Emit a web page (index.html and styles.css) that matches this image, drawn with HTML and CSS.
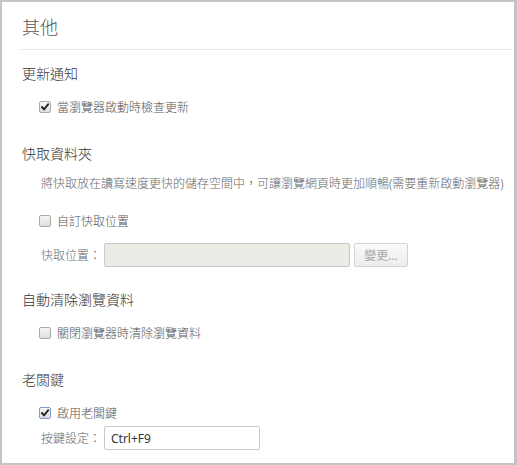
FILE: index.html
```html
<!DOCTYPE html>
<html lang="zh-TW">

<head>
    <meta charset="UTF-8">
    <meta name="viewport" content="width=device-width, initial-scale=1.0">
    <title>其他 - 設定</title>
    <link rel="stylesheet" href="styles.css">
</head>

<body>
    <div class="settings-frame">
        <div class="page-header">
            <h1>其他</h1>
        </div>

        <div class="section section-first">
            <h2 class="section-title">更新通知</h2>
            <label class="option">
                <span class="box checked">
                    <svg viewBox="0 0 12 12" width="12" height="12"><path d="M2.3 6 L4.9 8.9 L9.9 2.6" fill="none" stroke="#262626" stroke-width="2.3" stroke-linecap="round" stroke-linejoin="round"/></svg>
                </span>
                當瀏覽器啟動時檢查更新
            </label>
        </div>

        <div class="section">
            <h2 class="section-title">快取資料夾</h2>
            <p class="desc">將快取放在讀寫速度更快的儲存空間中，可讓瀏覽網頁時更加順暢(需要重新啟動瀏覽器)</p>
            <label class="option option-loose">
                <span class="box"></span>
                自訂快取位置
            </label>
            <div class="field-row field-cache">
                <span class="field-label">快取位置：</span>
                <input type="text" class="text-input input-path" disabled>
                <button class="btn-change" disabled>變更...</button>
            </div>
        </div>

        <div class="section section-after-field">
            <h2 class="section-title">自動清除瀏覽資料</h2>
            <label class="option">
                <span class="box"></span>
                關閉瀏覽器時清除瀏覽資料
            </label>
        </div>

        <div class="section">
            <h2 class="section-title">老闆鍵</h2>
            <label class="option">
                <span class="box checked focused">
                    <svg viewBox="0 0 12 12" width="12" height="12"><path d="M2.3 6 L4.9 8.9 L9.9 2.6" fill="none" stroke="#262626" stroke-width="2.3" stroke-linecap="round" stroke-linejoin="round"/></svg>
                </span>
                啟用老闆鍵
            </label>
            <div class="field-row field-key">
                <span class="field-label">按鍵設定：</span>
                <input type="text" class="text-input input-key" value="Ctrl+F9">
            </div>
        </div>
    </div>
</body>

</html>
```

FILE: styles.css
```css
* {
    margin: 0;
    padding: 0;
    box-sizing: border-box;
    font-family: 'Noto Sans', 'Noto Sans CJK TC', sans-serif;
}

body {
    background-color: #fff;
    color: #333;
}

.settings-frame {
    width: 517px;
    height: 465px;
    border: 2px solid #c4c4c4;
    border-right-width: 3px;
    padding-left: 18px;
    overflow: hidden;
}

.page-header {
    height: 48px;
    padding-top: 3px;
    display: flex;
    align-items: center;
    border-bottom: 1px solid #e6e6e6;
    margin-right: 3px;
}

.page-header h1 {
    font-size: 18px;
    font-weight: 300;
    color: #555;
    padding-left: 2px;
    line-height: 24px;
}

.section {
    margin-top: 27px;
}

.section-first {
    margin-top: 14px;
}

.section-after-field {
    margin-top: 23px;
}

.section-title {
    font-size: 14px;
    font-weight: 300;
    line-height: 20px;
    color: #333;
    padding-left: 2px;
}

.option {
    display: flex;
    align-items: center;
    gap: 6px;
    height: 20px;
    margin-top: 13px;
    margin-left: 19px;
    font-size: 12px;
    font-weight: 300;
    color: #555;
}

.option-loose {
    margin-top: 17px;
}

.box {
    width: 12px;
    height: 12px;
    border: 1px solid #a9a9a9;
    border-radius: 2px;
    background: linear-gradient(#f6f6f6, #dedede);
    display: flex;
    align-items: center;
    justify-content: center;
    flex-shrink: 0;
}

.box svg {
    display: block;
}

.box.focused {
    border-color: #7f9bd0;
}

.desc {
    margin-top: 10px;
    margin-left: 21px;
    font-size: 12px;
    font-weight: 300;
    line-height: 20px;
    color: #666;
    white-space: nowrap;
}

.field-row {
    display: flex;
    align-items: center;
    height: 24px;
    margin-left: 21px;
}

.field-cache {
    margin-top: 12px;
}

.field-key {
    margin-top: 3px;
}

.field-label {
    width: 63px;
    font-size: 12px;
    font-weight: 300;
    color: #666;
}

.text-input {
    height: 24px;
    border: 1px solid #c9c9c9;
    border-radius: 2px;
    padding: 0 6px;
    font-size: 12px;
    color: #333;
    outline: none;
}

.input-path {
    width: 246px;
    background-color: #ecebe6;
}

.input-key {
    width: 156px;
    background-color: #fff;
}

.btn-change {
    width: 54px;
    height: 24px;
    margin-left: 4px;
    border: 1px solid #d2d2d2;
    border-radius: 2px;
    background: linear-gradient(#fafafa, #ededed);
    font-size: 12px;
    color: #a8a8a8;
}
```
